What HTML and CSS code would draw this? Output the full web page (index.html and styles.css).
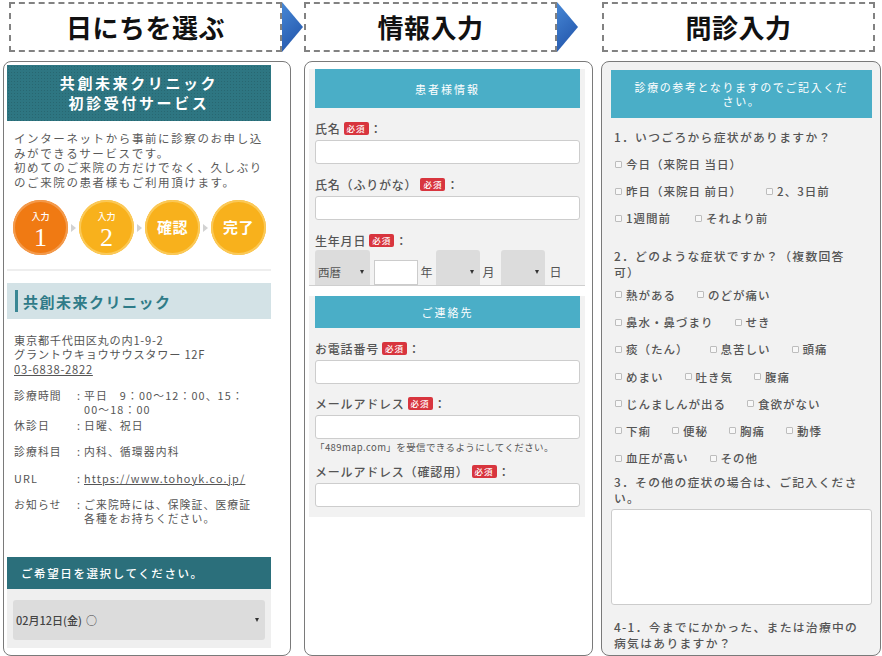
FILE: index.html
```html
<!DOCTYPE html>
<html lang="ja">
<head>
<meta charset="utf-8">
<title>共創未来クリニック 初診受付サービス</title>
<link rel="stylesheet" href="styles.css">
</head>
<body>
<div class="steps-head">
  <div class="head head-1">日にちを選ぶ</div>
  <svg class="arrow" viewBox="0 0 21 50" aria-hidden="true">
    <defs>
      <linearGradient id="ag1" x1="0" y1="0" x2="0.4" y2="1">
        <stop offset="0" stop-color="#4788d6"/>
        <stop offset="1" stop-color="#2559ae"/>
      </linearGradient>
    </defs>
    <polygon points="0,0 21,25 0,50" fill="url(#ag1)"/>
  </svg>
  <div class="head head-2">情報入力</div>
  <svg class="arrow" viewBox="0 0 21 50" aria-hidden="true">
    <defs>
      <linearGradient id="ag2" x1="0" y1="0" x2="0.4" y2="1">
        <stop offset="0" stop-color="#4788d6"/>
        <stop offset="1" stop-color="#2559ae"/>
      </linearGradient>
    </defs>
    <polygon points="0,0 21,25 0,50" fill="url(#ag2)"/>
  </svg>
  <div class="head head-3">問診入力</div>
</div>

<div class="panels">
  <!-- Panel 1 -->
  <section class="panel panel-date">
    <div class="date-col">
      <div class="clinic-title">共創未来クリニック<br>初診受付サービス</div>
      <p class="intro">インターネットから事前に診察のお申し込<br>みができるサービスです。<br>初めてのご来院の方だけでなく、久しぶり<br>のご来院の患者様もご利用頂けます。</p>
      <div class="progress">
        <div class="step step-current"><span class="step-label">入力</span><span class="step-num">1</span></div>
        <div class="step-sep"></div>
        <div class="step"><span class="step-label">入力</span><span class="step-num">2</span></div>
        <div class="step-sep"></div>
        <div class="step"><span class="step-word">確認</span></div>
        <div class="step-sep"></div>
        <div class="step"><span class="step-word">完了</span></div>
      </div>
      <div class="divider"></div>
      <div class="clinic-name"><span class="clinic-name-bar"></span>共創未来クリニック</div>
      <p class="address">東京都千代田区丸の内1-9-2<br>グラントウキョウサウスタワー 12F<br><span class="link">03-6838-2822</span></p>
      <div class="info">
        <div class="info-row"><span class="info-label">診療時間</span><span class="info-colon">:</span><span class="info-value"><span class="info-line">平日　9：00〜12：00、15：</span><span class="info-line">00〜18：00</span></span></div>
        <div class="info-row info-row-tight"><span class="info-label">休診日</span><span class="info-colon">:</span><span class="info-value">日曜、祝日</span></div>
        <div class="info-row"><span class="info-label">診療科目</span><span class="info-colon">:</span><span class="info-value">内科、循環器内科</span></div>
        <div class="info-row info-row-url"><span class="info-label">URL</span><span class="info-colon">:</span><span class="info-value link">https://www.tohoyk.co.jp/</span></div>
        <div class="info-row"><span class="info-label">お知らせ</span><span class="info-colon">:</span><span class="info-value"><span class="info-line">ご来院時には、保険証、医療証</span><span class="info-line">各種をお持ちください。</span></span></div>
      </div>
      <div class="date-bar">ご希望日を選択してください。</div>
      <div class="date-area">
        <div class="date-select"><span class="date-value">02月12日(金)<span class="date-mark">○</span></span><span class="caret"></span></div>
      </div>
    </div>
  </section>

  <!-- Panel 2 -->
  <section class="panel panel-info">
    <div class="form-block form-block-1">
      <div class="form-bar">患者様情報</div>
      <div class="field-label">氏名<span class="req">必須</span>：</div>
      <div class="text-input"></div>
      <div class="field-label">氏名（ふりがな）<span class="req">必須</span>：</div>
      <div class="text-input"></div>
      <div class="field-label">生年月日<span class="req">必須</span>：</div>
      <div class="birth-row">
        <div class="birth-select birth-select-era"><span>西暦</span><span class="caret"></span></div>
        <div class="birth-input"></div>
        <span class="birth-unit">年</span>
        <div class="birth-select"><span class="caret"></span></div>
        <span class="birth-unit birth-unit-wide">月</span>
        <div class="birth-select"><span class="caret"></span></div>
        <span class="birth-unit birth-unit-last">日</span>
      </div>
    </div>
    <div class="form-block form-block-2">
      <div class="form-bar form-bar-short">ご連絡先</div>
      <div class="field-label">お電話番号<span class="req">必須</span>：</div>
      <div class="text-input"></div>
      <div class="field-label field-label-close">メールアドレス<span class="req">必須</span>：</div>
      <div class="text-input"></div>
      <p class="field-note">「489map.com」を受信できるようにしてください。</p>
      <div class="field-label field-label-after-note">メールアドレス（確認用）<span class="req">必須</span>：</div>
      <div class="text-input"></div>
    </div>
  </section>

  <!-- Panel 3 -->
  <section class="panel panel-q">
    <div class="q-bar">診療の参考となりますのでご記入くだ<br>さい。</div>
    <p class="q-title q1">1．いつごろから症状がありますか？</p>
    <div class="opts opts-1">
      <div class="opt-row"><span class="opt"><span class="cb"></span>今日（来院日 当日）</span></div>
      <div class="opt-row"><span class="opt opt-wide"><span class="cb"></span>昨日（来院日 前日）</span><span class="opt"><span class="cb"></span>2、3日前</span></div>
      <div class="opt-row"><span class="opt opt-wide"><span class="cb"></span>1週間前</span><span class="opt"><span class="cb"></span>それより前</span></div>
    </div>
    <p class="q-title q2">2．どのような症状ですか？（複数回答<br>可）</p>
    <div class="opts opts-2">
      <div class="opt-row"><span class="opt"><span class="cb"></span>熱がある</span><span class="opt"><span class="cb"></span>のどが痛い</span></div>
      <div class="opt-row"><span class="opt"><span class="cb"></span>鼻水・鼻づまり</span><span class="opt"><span class="cb"></span>せき</span></div>
      <div class="opt-row"><span class="opt"><span class="cb"></span>痰（たん）</span><span class="opt"><span class="cb"></span>息苦しい</span><span class="opt"><span class="cb"></span>頭痛</span></div>
      <div class="opt-row"><span class="opt"><span class="cb"></span>めまい</span><span class="opt"><span class="cb"></span>吐き気</span><span class="opt"><span class="cb"></span>腹痛</span></div>
      <div class="opt-row"><span class="opt"><span class="cb"></span>じんましんが出る</span><span class="opt"><span class="cb"></span>食欲がない</span></div>
      <div class="opt-row"><span class="opt"><span class="cb"></span>下痢</span><span class="opt"><span class="cb"></span>便秘</span><span class="opt"><span class="cb"></span>胸痛</span><span class="opt"><span class="cb"></span>動悸</span></div>
      <div class="opt-row"><span class="opt"><span class="cb"></span>血圧が高い</span><span class="opt"><span class="cb"></span>その他</span></div>
    </div>
    <p class="q-title q3">3．その他の症状の場合は、ご記入くださ<br>い。</p>
    <div class="q-textarea"></div>
    <p class="q-title q4">4-1．今までにかかった、または治療中の<br>病気はありますか？</p>
  </section>
</div>
</body>
</html>
```

FILE: styles.css
```css
* { box-sizing: border-box; margin: 0; padding: 0; }
html, body { background: #fff; }
body {
  width: 882px;
  height: 656px;
  overflow: hidden;
  font-family: "Noto Sans CJK JP", "Noto Sans", sans-serif;
  color: #555;
}

/* ---------- top step headers ---------- */
.steps-head {
  display: flex;
  align-items: flex-start;
  height: 50px;
  margin-top: 2px;
  margin-left: 9px;
}
.head {
  flex: none;
  height: 50px;
  border: 2px dashed #828282;
  display: flex;
  align-items: center;
  justify-content: center;
  font-size: 26px;
  font-weight: 700;
  color: #111;
  letter-spacing: 0.5px;
  padding-bottom: 1px;
}
.head-1 { width: 273px; }
.head-2 { width: 253px; margin-left: 1px; }
.head-3 { width: 273px; margin-left: 24px; }
.arrow { flex: none; display: block; width: 21px; height: 50px; }

/* ---------- panels ---------- */
.panels {
  display: flex;
  margin-top: 9px;
  height: 595px;
}
.panel {
  flex: none;
  height: 595px;
  border: 1px solid #7a7a7a;
  border-radius: 8px;
  overflow: hidden;
}

/* ---------- panel 1 : date ---------- */
.panel-date { margin-left: 3px; width: 288px; padding-left: 3px; }
.date-col { width: 264px; }

.clinic-title {
  margin-top: 3px;
  height: 56px;
  background-color: #2e7682;
  background-image: radial-gradient(rgba(0, 0, 0, 0.13) 0.8px, transparent 1px);
  background-size: 3px 3px;
  color: #fff;
  font-size: 15px;
  font-weight: 700;
  letter-spacing: 2.6px;
  line-height: 20px;
  text-align: center;
  display: flex;
  align-items: center;
  justify-content: center;
}

.intro {
  margin-top: 10px;
  padding-left: 7px;
  font-size: 11.5px;
  letter-spacing: 1.6px;
  line-height: 14.5px;
  white-space: nowrap;
  color: #5a5a5a;
}

.progress {
  display: flex;
  align-items: center;
  margin-top: 11px;
  padding-left: 6px;
  height: 55px;
}
.step {
  flex: none;
  width: 55px;
  height: 55px;
  border-radius: 50%;
  background: #f8b11c;
  box-shadow: inset 0 0 0 2px #fbc957;
  color: #fff;
  display: flex;
  flex-direction: column;
  align-items: center;
  justify-content: center;
}
.step-current { background: #f07a13; box-shadow: inset 0 0 0 2px #f39a4c; }
.step:nth-child(-n+3) { padding-top: 9px; }
.step-label { display: block; font-size: 9px; line-height: 11px; font-weight: 500; }
.step-num {
  display: block;
  font-family: "Liberation Serif", "DejaVu Serif", serif;
  font-size: 26px;
  line-height: 31px;
}
.step-word { font-size: 15px; font-weight: 700; line-height: 18px; margin-top: -2px; letter-spacing: 0.5px; }
.step-sep {
  flex: none;
  width: 11px;
  display: flex;
  justify-content: center;
}
.step-sep::before {
  content: "";
  border-top: 4px solid transparent;
  border-bottom: 4px solid transparent;
  border-left: 5px solid #d2d2d2;
}

.divider { margin-top: 14px; border-top: 2px solid #eeeeee; }

.clinic-name {
  margin-top: 12px;
  height: 36px;
  background: #d3e2e6;
  display: flex;
  align-items: center;
  padding-left: 8px;
  font-size: 15px;
  font-weight: 700;
  color: #2f7b88;
  letter-spacing: 1.5px;
}
.clinic-name-bar { width: 3px; height: 22px; background: #3a8794; margin-right: 5px; }

.address {
  margin-top: 14px;
  padding-left: 7px;
  font-size: 11.2px;
  line-height: 14.3px;
  letter-spacing: 0.75px;
  white-space: nowrap;
}
.link { text-decoration: underline; }

.info {
  margin-top: 12px;
  padding-left: 7px;
  font-size: 10.8px;
  letter-spacing: 1.15px;
  line-height: 14.5px;
}
.info-row { display: flex; margin-top: 11.5px; }
.info-row:first-child { margin-top: 0; }
.info-row-tight { margin-top: 1.5px; }
.info-row-url { margin-top: 12px; }
.info-label { flex: none; width: 63px; }
.info-colon { flex: none; width: 7px; }
.info-value { display: block; white-space: nowrap; }
.info-line { display: block; }

.date-bar {
  margin-top: 31px;
  height: 32.5px;
  background: #2b6f7b;
  color: #fff;
  font-size: 11.5px;
  font-weight: 500;
  letter-spacing: 1.6px;
  display: flex;
  align-items: center;
  padding-left: 14px;
}
.date-area { background: #efefef; padding: 11px 6px 8px; }
.date-select {
  height: 40px;
  background: #dcdcdc;
  border-radius: 3px;
  display: flex;
  align-items: center;
  justify-content: space-between;
  padding: 0 6px 0 3px;
  font-size: 11px;
  font-weight: 500;
  color: #444;
}
.date-mark { margin-left: 4px; }
.caret {
  display: block;
  width: 0;
  height: 0;
  border-left: 2.5px solid transparent;
  border-right: 2.5px solid transparent;
  border-top: 4px solid #333;
}

/* ---------- panel 2 : form ---------- */
.panel-info { margin-left: 13px; width: 289px; padding-left: 4px; }
.form-block { width: 276px; background: #f2f2f2; padding: 0 5px 0 6px; }
.form-block-1 { margin-top: 7px; border-bottom: 1px solid #cfcfcf; }
.form-block-2 { margin-top: 10px; padding-bottom: 10px; }
.form-bar {
  margin-top: 7px;
  height: 39px;
  background: #4aaec7;
  color: #fff;
  font-size: 11px;
  letter-spacing: 2px;
  display: flex;
  align-items: center;
  justify-content: center;
}
.form-bar-short { margin-top: 0; height: 32.5px; }
.field-label {
  margin-top: 13px;
  display: flex;
  align-items: center;
  height: 14px;
  font-size: 12px;
  font-weight: 500;
  letter-spacing: 0.8px;
  color: #555;
  white-space: nowrap;
}
.field-label-close { margin-top: 12px; }
.field-label-after-note { margin-top: 11px; }
.req {
  display: inline-block;
  margin: 0 1px 0 3px;
  padding: 0 3px;
  background: #d8353e;
  color: #fff;
  font-size: 8.5px;
  line-height: 13px;
  letter-spacing: 1px;
  border-radius: 2px;
}
.text-input {
  margin-top: 5px;
  width: 265px;
  height: 24px;
  background: #fff;
  border: 1px solid #cdcdcd;
  border-radius: 3px;
}
.field-note {
  margin-top: 2px;
  line-height: 12px;
  font-size: 9.5px;
  letter-spacing: 0.4px;
  color: #555;
  white-space: nowrap;
}

.birth-row {
  margin-top: 3px;
  height: 34.5px;
  display: flex;
  align-items: flex-end;
  font-size: 12px;
  color: #555;
}
.birth-select {
  flex: none;
  width: 44px;
  height: 34.5px;
  background: #dcdcdc;
  border-radius: 3px 3px 0 0;
  display: flex;
  align-items: flex-end;
  justify-content: flex-end;
  padding: 0 6px 11px 3px;
}
.birth-select-era {
  width: 54.5px;
  justify-content: space-between;
  padding-bottom: 6px;
  align-items: center;
  height: 34.5px;
  padding-top: 15px;
}
.birth-select-era span:first-child { line-height: 14px; font-size: 11.5px; }
.birth-input {
  flex: none;
  margin-left: 4px;
  width: 44px;
  height: 25px;
  background: #fff;
  border: 1px solid #cccccc;
}
.birth-unit { line-height: 14px; padding-bottom: 6px; margin: 0 3px; }
.birth-unit-wide { margin-right: 6px; }
.birth-unit-last { margin-left: 5px; }

/* ---------- panel 3 : questionnaire ---------- */
.panel-q { margin-left: 8px; width: 280px; background: #f2f2f2; padding-left: 9px; }
.q-bar {
  margin-top: 8px;
  width: 261px;
  height: 48px;
  background: #4aaec7;
  color: #fff;
  font-size: 11px;
  letter-spacing: 1.6px;
  line-height: 14.5px;
  text-align: center;
  display: flex;
  align-items: center;
  justify-content: center;
}
.q-title {
  padding-left: 3px;
  font-size: 11.8px;
  font-weight: 500;
  letter-spacing: 1.3px;
  line-height: 16px;
  white-space: nowrap;
  color: #555;
}
.q1 { margin-top: 11px; }
.q2 { margin-top: 16.9px; }
.q3 { margin-top: 1.8px; }
.q4 { margin-top: 14.6px; }

.opts-1 { margin-top: 5.5px; }
.opts-2 { margin-top: 1px; }
.opt-row {
  height: 27px;
  display: flex;
  align-items: center;
  padding-left: 4px;
  font-size: 11.5px;
  font-weight: 500;
  letter-spacing: 1px;
  white-space: nowrap;
  color: #555;
}
.opts-2 .opt-row { height: 27.2px; }
.opt { display: flex; align-items: center; margin-right: 21px; }
.opt-wide { margin-right: 24px; }
.cb {
  flex: none;
  width: 7px;
  height: 7px;
  border: 1px solid #bdbdbd;
  background: #f8f8f8;
  border-radius: 1px;
  margin-right: 4px;
}
.q-textarea {
  margin-top: 3px;
  width: 261px;
  height: 96px;
  background: #fff;
  border: 1px solid #cccccc;
  border-radius: 3px;
}
```
